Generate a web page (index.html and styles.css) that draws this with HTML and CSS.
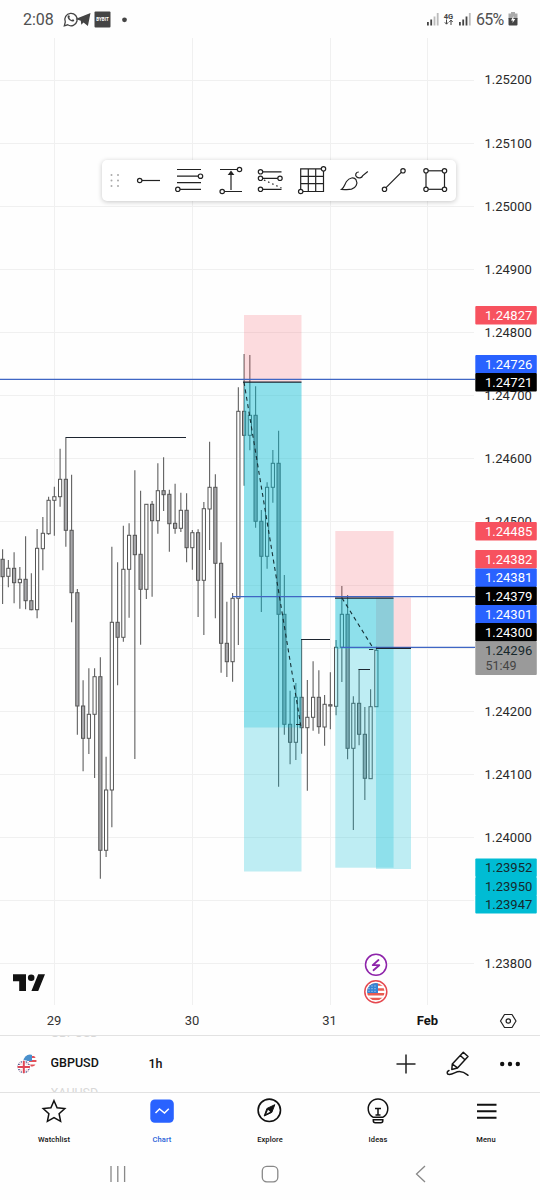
FILE: index.html
```html
<!DOCTYPE html>
<html lang="en">
<head>
    <meta charset="UTF-8" />
    <meta name="viewport" content="width=device-width, initial-scale=1.0" />
    <title>GBPUSD 1h</title>
    <link rel="stylesheet" href="styles.css">
</head>
<body>
    <!-- Status bar -->
    <header class="status-bar">
        <span class="status-time">2:08</span>
        <svg class="status-icons" width="70" height="18" viewBox="0 0 70 18">
            <path d="M2.300 15.800l1-3.800A6.200 6.200 0 1 1 5.700 14.800z" fill="none" stroke="#444" stroke-width="1.300" />
            <path d="M5.900 5.800c.8-1 1.400-.6 2 .9l-.6 1c.6 1.200 1.400 1.900 2.600 2.400l1-.9c1.500.7 1.800 1 .9 2-2.600 1.600-7.500-3-5.900-5.400z" fill="#444" />
            <path d="M13.500 9L28.500 3l-2.600 13-4.400-3.500-2.200 2.200-.5-3.900z" fill="#444" />
            <rect x="32.500" y="1.500" width="16" height="16" rx="1" fill="#444" />
            <text x="40.500" y="11.200" class="app-text">BYBIT</text>
            <circle cx="62.500" cy="9.800" r="2.400" fill="#444" />
        </svg>
        <div class="status-right">
            <svg width="46" height="16" viewBox="0 0 46 16">
                <g fill="#444">
                    <rect x="0" y="11" width="1.800" height="3.500" />
                    <rect x="3.300" y="8.500" width="1.800" height="6" />
                    <rect x="32" y="11" width="1.800" height="3.500" />
                    <rect x="35.300" y="8.500" width="1.800" height="6" />
                    <rect x="38.600" y="5.500" width="1.800" height="9" />
                </g>
                <g fill="#bbb">
                    <rect x="6.600" y="5.500" width="1.800" height="9" />
                    <rect x="9.800" y="2" width="1.800" height="12.500" />
                    <rect x="41.900" y="2" width="1.800" height="12.500" />
                </g>
                <text x="21.500" y="7.500" class="net-text">4G</text>
                <path d="M19.500 8.500v4.500m-1.700-1.700l1.700 1.900 1.700-1.900M24 14V9.300m-1.700 1.700L24 9.100l1.700 1.900" fill="none" stroke="#444" />
            </svg>
            <span class="battery-text">65%</span>
            <svg width="10" height="14" viewBox="0 0 10 14">
                <path d="M3 0h4v1.500h2.500V7H.5V1.500H3z" fill="#aaa" />
                <path d="M.5 6h9v6.500q0 1-1 1h-7q-1 0-1-1z" fill="#444" />
                <path d="M5.500 4L3 8.500h1.800L4.500 11 7.300 7H5.400z" fill="#fff" />
            </svg>
        </div>
    </header>

    <!-- Chart -->
    <main class="chart-area">
        <svg id="chart" class="chart" width="540" height="997" viewBox="0 38 540 997">
            <g id="grid" class="grid"></g>
            <g id="candles"></g>

            <!-- Short positions -->
            <g class="loss">
                <rect x="244" y="315" width="57.500" height="67" />
                <rect x="335.300" y="531" width="58.300" height="67" />
                <rect x="376" y="597.500" width="35" height="50.500" />
            </g>
            <g class="profit">
                <rect x="244" y="382" width="57.500" height="489.500" />
                <rect x="244" y="382" width="57.500" height="345.500" />
                <rect x="335.300" y="598" width="58.300" height="269.700" />
                <rect x="335.300" y="598" width="58.300" height="51" />
                <rect x="376" y="649" width="35" height="220" />
            </g>
            <g class="line-blue">
                <path d="M0 379.300H475" />
                <path d="M232 596.700H475" />
                <path d="M341 647.300H475" />
            </g>
            <g class="line-black">
                <path d="M243 382.200H301.500M335 598.200H393.500M376 648.300H411" />
                <path d="M65.500 437.500H186M301 639.500H330M358.500 669.500H370" />
            </g>
            <g class="line-dash">
                <path d="M244 382L301 727M342 598L374 649.500M296 724.500H301M369 649.500H376" />
            </g>

            <g id="prices"></g>
            <g id="badges"></g>

            <!-- TradingView logo -->
            <path d="M13 974.300h13v16.700h-6.800v-9.800H13zM38.200 974.300H45l-6.800 16.700h-6.800z" fill="#131313" />
            <circle cx="31.200" cy="977.800" r="3.300" fill="#131313" />

            <!-- Event marks -->
            <circle cx="376" cy="964.800" r="10.500" fill="#fff" stroke="#8e24aa" stroke-width="1.500" />
            <path d="M378.500 960l-5.800 5.200h6.600l-5.800 5" fill="none" stroke="#8e24aa" stroke-width="1.800" stroke-linejoin="round" stroke-linecap="round" />
            <circle cx="375.800" cy="991.800" r="11" fill="#fff" stroke="#e5484f" stroke-width="1.500" />
            <clipPath id="flag-clip"><circle cx="375.800" cy="991.800" r="8.800" /></clipPath>
            <g clip-path="url(#flag-clip)">
                <path d="M366 984.500h20M366 989.500h20M366 994.300h20M366 999h20" stroke="#e85b50" stroke-width="2.500" />
                <rect x="366" y="982" width="12" height="11" fill="#3583d4" />
                <path d="M368.500 986h9M368.500 988.700h9M368.500 991.300h9" stroke="#fff" stroke-width=".8" stroke-dasharray="1 2" />
            </g>

            <!-- Time scale -->
            <g class="time-scale">
                <text x="54" y="1025.300">29</text>
                <text x="192" y="1025.300">30</text>
                <text x="329.500" y="1025.300">31</text>
                <text x="427.500" y="1025.300" class="month">Feb</text>
            </g>
            <path d="M504.500 1014.500h7.500l4 6.500-4 6.500h-7.500l-4-6.500z" fill="none" stroke="#222" stroke-width="1.200" stroke-linejoin="round" />
            <circle cx="508.300" cy="1021" r="2.200" fill="none" stroke="#222" stroke-width="1.200" />
        </svg>

        <!-- Favourite drawing tools -->
        <div class="toolbar">
            <svg width="354" height="41" viewBox="102 160 354 41" fill="none" stroke="#222" stroke-width="1.200">
                <g fill="#aaa" stroke="none">
                    <circle cx="111.500" cy="175" r="1" /><circle cx="118" cy="175" r="1" />
                    <circle cx="111.500" cy="180.500" r="1" /><circle cx="118" cy="180.500" r="1" />
                    <circle cx="111.500" cy="186" r="1" /><circle cx="118" cy="186" r="1" />
                </g>
                <path d="M142 180.500h18" /><circle cx="139.700" cy="180.500" r="2.200" />
                <path d="M177 169.500h24M177 176.200h21.300M177 182.600h24M187 189.300h14M180 189.300h8" />
                <circle cx="200.500" cy="176.200" r="2.200" /><circle cx="177.800" cy="189.300" r="2.200" />
                <path d="M220 169.500h17.300M224.500 191.500h17.500M231 190v-17" />
                <path d="M228.800 174.500l2.200-3 2.200 3z" fill="#222" />
                <circle cx="239.500" cy="169.500" r="2.200" /><circle cx="222.200" cy="191.500" r="2.200" />
                <path d="M262.500 171.800h19M262.500 178.300h15.300M262.500 189.300h19" />
                <path d="M264 180l17.500 8" stroke-dasharray="1.500 3" />
                <circle cx="260.500" cy="171.800" r="2.200" /><circle cx="260.500" cy="178.300" r="2.200" />
                <circle cx="280" cy="178.300" r="2.200" /><circle cx="260.500" cy="189.300" r="2.200" />
                <path d="M321 168.800h-20.300v20.500M303 191.500h20.500V171M308.300 168.800v22.700M315.700 168.800v22.700M300.700 176.300h22.800M300.700 183.700h22.800" />
                <circle cx="323.500" cy="168.800" r="2.200" /><circle cx="300.700" cy="191.500" r="2.200" />
                <path d="M341.500 189.500c3-2.500 3-5 5-8 3-4 7.500-4.800 9.500-1.800 2.200 3.800-.3 8.300-4.500 9.500-3 .7-6 .3-10 .3zM358.800 172c-3 0-4 3-2.300 4.800 2 1.800 5.300 1.500 6.300-1.300l5-4" />
                <path d="M386 187.700l15.500-15.500" /><circle cx="384.500" cy="189.300" r="2.200" /><circle cx="403" cy="170.800" r="2.200" />
                <rect x="426" y="170.800" width="18.500" height="18.500" />
                <g fill="#fff">
                    <circle cx="426" cy="170.800" r="2.200" /><circle cx="444.500" cy="170.800" r="2.200" />
                    <circle cx="426" cy="189.300" r="2.200" /><circle cx="444.500" cy="189.300" r="2.200" />
                </g>
            </svg>
        </div>
    </main>

    <!-- Symbol bar -->
    <section class="symbol-bar">
        <svg class="symbol-flags" width="20" height="20" viewBox="0 0 20 20">
            <clipPath id="us-clip"><circle cx="13" cy="7" r="6.500" /></clipPath>
            <g clip-path="url(#us-clip)">
                <rect width="20" height="14" fill="#fff" />
                <path d="M12 3h8M12 7h8M7 11.500h13" stroke="#e2525b" stroke-width="2" />
                <path d="M6 0h9v7H6z" fill="#4a90cc" />
            </g>
            <circle cx="6.800" cy="13" r="7" fill="#fff" />
            <clipPath id="uk-clip"><circle cx="6.800" cy="13" r="6.200" /></clipPath>
            <g clip-path="url(#uk-clip)">
                <rect y="6" width="14" height="14" fill="#3c4a86" />
                <path d="M1 7l12 12M13 7L1 19" stroke="#f1dce2" stroke-width="2.500" />
                <path d="M6.800 6v14M0 13h14" stroke="#fff" stroke-width="4" />
                <path d="M6.800 6v14M0 13h14" stroke="#df4655" stroke-width="2" />
            </g>
        </svg>
        <div class="symbol-wheel">
            <span class="ghost">GBPUSD</span>
            <span>GBPUSD</span>
            <span class="ghost">XAUUSD</span>
        </div>
        <span class="interval">1h</span>
        <div class="symbol-actions">
            <svg width="20" height="20" viewBox="0 0 20 20"><path d="M10 .5v19M.5 10h19" stroke="#222" stroke-width="1.500" /></svg>
            <svg width="24" height="26" viewBox="0 0 24 26" fill="none" stroke="#161616" stroke-width="1.500" stroke-linejoin="round" stroke-linecap="round">
                <path d="M6.300 13L17.300 1.200l4.700 4.300-10.500 11.400-5.700 1.500zM6.300 13l5.200 3.900M14.300 4.500l4.600 4.300" />
                <path d="M3 19.500c-2.700 1-2.300 4 .3 4 4.500-.2 6.200-3 10.200-3 4.200 0 5.500 1.300 8.500 3.800" />
            </svg>
            <svg width="20" height="6" viewBox="0 0 20 6" fill="#111"><circle cx="2.200" cy="3" r="2.200" /><circle cx="10" cy="3" r="2.200" /><circle cx="17.800" cy="3" r="2.200" /></svg>
        </div>
    </section>

    <!-- Tabs -->
    <nav class="tabs">
        <a class="tab">
            <svg width="28" height="28" viewBox="0 0 28 28"><path d="M14 3.700l3.100 7 7.700.8-5.700 5.200 1.500 7.600L14 20.500l-6.600 3.800 1.500-7.600-5.700-5.200 7.700-.8z" fill="none" stroke="#111" stroke-width="1.500" /></svg>
            <span>Watchlist</span>
        </a>
        <a class="tab active">
            <svg width="28" height="28" viewBox="0 0 28 28"><rect x="2.300" y="2.500" width="23.500" height="23.300" rx="4.500" fill="#2962ff" /><path d="M7.500 16l4-4 5 4 4.300-4.300" fill="none" stroke="#fff" stroke-width="1.500" /></svg>
            <span>Chart</span>
        </a>
        <a class="tab">
            <svg width="28" height="28" viewBox="0 0 28 28"><circle cx="13.300" cy="13.300" r="11.200" fill="none" stroke="#111" stroke-width="1.600" /><path d="M18.800 7.700l-3 7.700-7.600 3.600 2.700-7.500z" fill="#111" stroke="#111" /><path d="M12 12.800l2.200 2-3.800 2z" fill="#fff" /></svg>
            <span>Explore</span>
        </a>
        <a class="tab">
            <svg width="28" height="28" viewBox="0 0 28 28" fill="none" stroke="#111" stroke-width="1.500"><path d="M9.300 20.300a9.800 9.800 0 1 1 9.400 0zM11 11.500h6M14 11.500v6.500M11.500 18h5" /><path d="M9.300 22.700h9.500v1q0 2-2 2h-5.500q-2 0-2-2z" /></svg>
            <span>Ideas</span>
        </a>
        <a class="tab">
            <svg width="28" height="28" viewBox="0 0 28 28"><path d="M5 7.700h19.500M5 14.200h19.500M5 20.700h19.500" stroke="#111" stroke-width="2" /></svg>
            <span>Menu</span>
        </a>
    </nav>

    <!-- System navigation -->
    <footer class="system-nav">
        <svg width="18" height="18" viewBox="0 0 18 18"><path d="M2 1v16M8.800 1v16M15.600 1v16" /></svg>
        <svg width="18" height="18" viewBox="0 0 18 18"><rect x="1.300" y="1.300" width="15.500" height="15.500" rx="4.500" /></svg>
        <svg width="18" height="18" viewBox="0 0 18 18"><path d="M13 1L4.500 9l8.500 8" /></svg>
    </footer>

    <script src="chart.js"></script>
</body>
</html>
```

FILE: styles.css
```css
body {
    margin: 0;
    width: 540px;
    height: 1200px;
    overflow: hidden;
    display: flex;
    flex-direction: column;
    background-color: #fefefe;
    color: #131313;
    font-family: Roboto, sans-serif;
}
svg {
    display: block;
    flex-shrink: 0;
}
/* Status bar */
.status-bar {
    display: flex;
    align-items: center;
    height: 38px;
    padding: 0 22px 0 23px;
    box-sizing: border-box;
    color: #505050;
}
.status-time {
    font-size: 16px;
    width: 39px;
    padding-top: 1px;
}
.status-right {
    display: flex;
    align-items: center;
    margin-left: auto;
    gap: 3px;
}
.battery-text {
    font-size: 16px;
    padding-top: 1px;
    width: 29px;
    letter-spacing: -0.8px;
}
.app-text {
    font-size: 4.5px;
    font-weight: bold;
    fill: white;
    text-anchor: middle;
}
.net-text {
    font-size: 7.5px;
    font-weight: bold;
    fill: #444;
    text-anchor: middle;
}
/* Chart */
.chart-area {
    position: relative;
    height: 997px;
}
.grid {
    stroke: #f0f0f0;
    stroke-width: 1;
}
.wick {
    stroke: #606060;
    stroke-width: 1.1;
}
.candle-up {
    fill: #ffffff;
    stroke: #555;
}
.candle-down {
    fill: #a7a7aa;
    stroke: #555;
}
.loss {
    fill: rgba(247, 82, 95, 0.2);
}
.profit {
    fill: rgba(0, 188, 212, 0.25);
}
.line-blue {
    stroke: #3f66c4;
    stroke-width: 1.2;
}
.line-black {
    fill: none;
    stroke: #1d2530;
    stroke-width: 1.2;
}
.line-dash {
    stroke: #173238;
    stroke-width: 1.1;
    stroke-dasharray: 4 3.5;
}
.price {
    font-size: 13px;
    fill: #2a2a2a;
}
.badge-light {
    font-size: 13px;
    fill: #ffffff;
}
.badge-dark {
    font-size: 13px;
    fill: #16282c;
}
.countdown {
    font-size: 12.5px;
    fill: #444;
}
.time-scale {
    font-size: 13px;
    fill: #333;
    text-anchor: middle;
}
.month {
    font-weight: bold;
    fill: #131313;
}
.toolbar {
    position: absolute;
    left: 102px;
    top: 122px;
    background-color: white;
    border-radius: 5px;
    box-shadow: 0 1px 5px rgba(0, 0, 0, 0.22);
}
/* Symbol bar */
.symbol-bar {
    display: flex;
    align-items: center;
    height: 56px;
    padding: 0 20px 0 17px;
    border-top: 1px solid #e2e2e2;
    font-size: 12.5px;
    font-weight: 500;
}
.symbol-wheel {
    display: flex;
    flex-direction: column;
    justify-content: center;
    height: 56px;
    width: 98px;
    margin-left: 13.5px;
    overflow: hidden;
    line-height: 30px;
}
.symbol-wheel span {
    position: relative;
    top: -0.8px;
}
.interval {
    padding-bottom: 1.5px;
}
.ghost {
    color: #d8d8d8;
    font-weight: normal;
}
.symbol-actions {
    display: flex;
    align-items: center;
    gap: 30px;
    margin-left: auto;
}
/* Tabs */
.tabs {
    display: flex;
    height: 56px;
    border-top: 1px solid #e2e2e2;
}
.tab {
    display: flex;
    flex-direction: column;
    align-items: center;
    width: 108px;
    padding-top: 4px;
    font-size: 7.5px;
    font-weight: 500;
    letter-spacing: 0.1px;
}
.tab span {
    margin-top: 10px;
}
.active {
    color: #2962d8;
}
/* System navigation */
.system-nav {
    display: flex;
    gap: 133.500px;
    padding: 16px 0 0 109px;
}
.system-nav svg {
    fill: none;
    stroke: #888;
    stroke-width: 1.3;
}
```

FILE: chart.js
```javascript
const SVG_NS = "http://www.w3.org/2000/svg";
const FIRST_X = 2.6;
const STEP = 5.75;

// high, body top, body bottom, low, direction
const candles = [
    [549.3, 559.3, 576.7, 604, "d"],
    [560, 568.3, 576.3, 587.3, "u"],
    [552.3, 568.3, 582.7, 603.3, "d"],
    [567, 579.3, 582.7, 608.7, "u"],
    [536.3, 579.3, 600.7, 609.3, "d"],
    [573.3, 600.7, 609.7, 610.3, "d"],
    [529, 548.3, 609.7, 618.3, "u"],
    [517, 533.3, 548.7, 570.3, "u"],
    [496.7, 500.3, 533.7, 534.7, "u"],
    [486.7, 496.7, 500.3, 535.7, "u"],
    [448.7, 479.3, 496.7, 506.7, "u"],
    [437.7, 479.3, 530.3, 546.7, "d"],
    [474.7, 530.3, 592.7, 622.3, "d"],
    [589, 592.7, 706, 734.7, "d"],
    [680.3, 706, 738.3, 771.3, "d"],
    [668.3, 714.3, 738.3, 754, "u"],
    [668.3, 676.7, 714.3, 778, "u"],
    [657.3, 676.7, 850.3, 878.7, "d"],
    [756.7, 790, 850.3, 857, "u"],
    [546.7, 622.3, 790, 827.3, "u"],
    [562.3, 622.3, 637.3, 685.3, "d"],
    [525.7, 569.3, 637.3, 641.7, "u"],
    [523.3, 535.3, 569.3, 617.7, "u"],
    [470.3, 535.3, 554.7, 759, "d"],
    [490.7, 554.3, 589.3, 644.7, "d"],
    [504, 504.3, 589.3, 599, "u"],
    [501, 504.3, 520.7, 596.7, "d"],
    [463.3, 490.7, 520.7, 533.7, "u"],
    [457.3, 490.7, 494.7, 511, "d"],
    [489.7, 494.3, 523.7, 551.7, "d"],
    [483.7, 523.3, 528.3, 533.7, "d"],
    [492.7, 510.3, 528.3, 532, "u"],
    [493.3, 510.3, 547.7, 562.3, "d"],
    [530, 532.7, 547.7, 569.7, "u"],
    [529.3, 532.7, 580.3, 617, "d"],
    [502, 508.7, 580.3, 635, "u"],
    [441.7, 487.3, 509, 550, "u"],
    [474.3, 487.3, 563.3, 618.3, "d"],
    [542.3, 563.3, 643.3, 672.7, "d"],
    [601.7, 643.3, 661.7, 677, "d"],
    [593, 598.3, 661.7, 681.7, "u"],
    [387.3, 411.3, 598.3, 645, "u"],
    [354, 411.3, 435.3, 485.7, "d"],
    [355, 415.3, 435.3, 450.3, "u"],
    [386.3, 415.3, 521.3, 527.7, "d"],
    [510, 521.3, 556.3, 612, "d"],
    [482.3, 487.3, 556.3, 568.7, "u"],
    [450, 463.3, 487.3, 502.7, "u"],
    [430.7, 463.3, 614.3, 786.7, "d"],
    [575, 614.3, 724.3, 734.7, "d"],
    [690.7, 724.3, 742.3, 764.3, "d"],
    [683, 697.3, 742.3, 760, "u"],
    [639.3, 697.3, 727.7, 753.7, "d"],
    [680, 717.3, 727.7, 790.7, "u"],
    [661.3, 697.3, 717.3, 730.7, "u"],
    [670.3, 697.3, 726.7, 733.7, "d"],
    [695, 704.3, 727, 745.7, "u"],
    [672.3, 704.7, 706, 729.3, "d"],
    [640, 647.3, 706.3, 715.3, "u"],
    [586, 614.3, 647.3, 682, "u"],
    [595, 614.3, 748.3, 759.3, "d"],
    [696.3, 703.3, 748.3, 830, "u"],
    [669.3, 703.3, 734.3, 745.3, "d"],
    [707, 734.3, 778.3, 800, "d"],
    [689.3, 706.7, 778.7, 778.7, "u"],
    [646.7, 650.3, 706.7, 706.7, "u"]
];

// top, height, background, text class, price
const badges = [
    [306, 18.5, "#f7525f", "badge-light", "1.24827"],
    [355, 18.5, "#2962ff", "badge-light", "1.24726"],
    [373, 18.5, "#000000", "badge-light", "1.24721"],
    [522, 18.5, "#f7525f", "badge-light", "1.24485"],
    [550, 18.5, "#f7525f", "badge-light", "1.24382"],
    [568.5, 18.5, "#2962ff", "badge-light", "1.24381"],
    [586.7, 18.5, "#000000", "badge-light", "1.24379"],
    [605, 18.5, "#2962ff", "badge-light", "1.24301"],
    [623, 18.5, "#000000", "badge-light", "1.24300"],
    [641.5, 33.5, "#9a9a9a", "badge-dark", "1.24296"],
    [858.5, 18.5, "#00bcd4", "badge-dark", "1.23952"],
    [877, 18.5, "#00bcd4", "badge-dark", "1.23950"],
    [895, 18.5, "#00bcd4", "badge-dark", "1.23947"]
];

// ticks fully covered by badges: 1.24400, 1.24300, 1.23900
const coveredTicks = [8, 9, 13];

function draw(parentId, tag, attrs, text) {
    const el = document.createElementNS(SVG_NS, tag);
    Object.keys(attrs).forEach((key) => el.setAttribute(key, attrs[key]));
    if (text) {
        el.textContent = text;
    }
    document.getElementById(parentId).appendChild(el);
}

// Grid and price scale
[54.5, 192.5, 330.5, 427.5].forEach((x) => {
    draw("grid", "line", { x1: x, x2: x, y1: 38, y2: 1005 });
});
for (let i = 0; i < 15; i++) {
    const y = 80 + i * 63.14;
    const lineY = Math.floor(y) + 0.5;
    draw("grid", "line", { x1: 0, x2: 474, y1: lineY, y2: lineY });
    if (!coveredTicks.includes(i)) {
        draw("prices", "text", { x: 484.5, y: y + 4.4, class: "price" }, (1.252 - i * 0.001).toFixed(5));
    }
}

// Candles
candles.forEach(([high, top, bottom, low, dir], i) => {
    const x = FIRST_X + i * STEP;
    draw("candles", "line", { x1: x, x2: x, y1: high, y2: low, class: "wick" });
    draw("candles", "rect", {
        x: x - 1.6,
        y: top,
        width: 3.2,
        height: bottom - top,
        class: dir === "u" ? "candle-up" : "candle-down"
    });
});

// Price badges
badges.forEach(([top, height, color, textClass, price]) => {
    draw("badges", "rect", { x: 475.3, y: top, width: 61.5, height: height, rx: 1, fill: color });
    draw("badges", "text", { x: 485, y: top + 13.9, class: textClass }, price);
});
draw("badges", "text", { x: 485.5, y: 670, class: "countdown" }, "51:49");
```
